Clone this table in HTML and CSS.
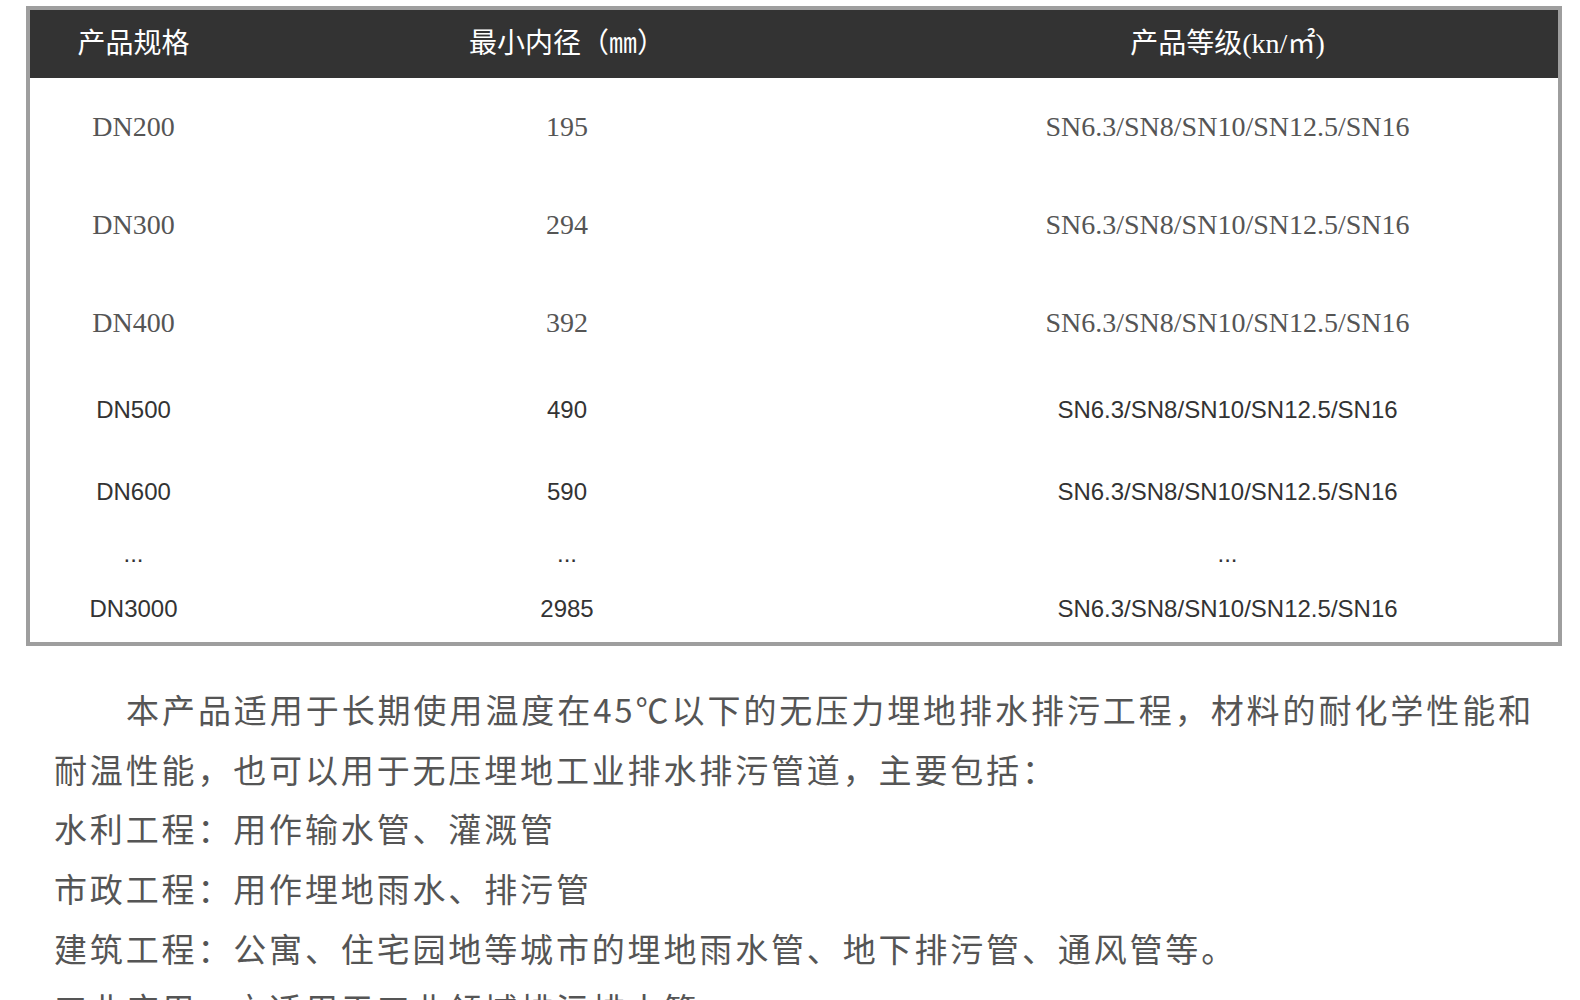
FILE: index.html
```html
<!DOCTYPE html>
<html lang="zh-CN">
<head>
<meta charset="utf-8">
<title>产品规格</title>
<link rel="stylesheet" href="styles.css">
</head>
<body>
<div class="page">
  <table class="spec">
    <colgroup>
      <col class="c1">
      <col class="c2">
      <col class="c3">
    </colgroup>
    <thead>
      <tr><th>产品规格</th><th>最小内径（㎜）</th><th>产品等级(kn/㎡)</th></tr>
    </thead>
    <tbody>
      <tr class="serif"><td>DN200</td><td>195</td><td>SN6.3/SN8/SN10/SN12.5/SN16</td></tr>
      <tr class="serif"><td>DN300</td><td>294</td><td>SN6.3/SN8/SN10/SN12.5/SN16</td></tr>
      <tr class="serif"><td>DN400</td><td>392</td><td>SN6.3/SN8/SN10/SN12.5/SN16</td></tr>
      <tr class="sans r4"><td>DN500</td><td>490</td><td>SN6.3/SN8/SN10/SN12.5/SN16</td></tr>
      <tr class="sans r5"><td>DN600</td><td>590</td><td>SN6.3/SN8/SN10/SN12.5/SN16</td></tr>
      <tr class="sans r6"><td>...</td><td>...</td><td>...</td></tr>
      <tr class="sans r7"><td>DN3000</td><td>2985</td><td>SN6.3/SN8/SN10/SN12.5/SN16</td></tr>
    </tbody>
  </table>
  <div class="desc">
    <p class="lead">本产品适用于长期使用温度在45℃以下的无压力埋地排水排污工程，材料的耐化学性能和耐温性能，也可以用于无压埋地工业排水排污管道，主要包括：</p>
    <p>水利工程：用作输水管、灌溉管</p>
    <p>市政工程：用作埋地雨水、排污管</p>
    <p>建筑工程：公寓、住宅园地等城市的埋地雨水管、地下排污管、通风管等。</p>
    <p>工业应用：亦适用于工业领域排污排水管</p>
  </div>
</div>
</body>
</html>
```

FILE: styles.css
```css
html, body {
  margin: 0;
  padding: 0;
  background: #fff;
}

.page {
  padding: 6px 18px 40px 26px;
}

.spec {
  box-sizing: border-box;
  width: 1536px;
  border: 4px solid #9e9e9e;
  border-collapse: separate;
  border-spacing: 0;
  table-layout: fixed;
}

.c1 { width: 207px; }
.c2 { width: 660px; }
.c3 { width: 661px; }

.spec th {
  background: #333;
  color: #fff;
  height: 68px;
  padding: 0;
  font-family: "Liberation Serif", "Noto Sans CJK SC", serif;
  font-size: 28px;
  font-weight: normal;
  line-height: 34px;
  text-align: center;
}

.spec td {
  padding: 0;
  text-align: center;
  vertical-align: top;
}

.serif td {
  font-family: "Liberation Serif", "Noto Sans CJK SC", serif;
  font-size: 28px;
  line-height: 34px;
  color: #555;
  padding: 32px 0;
}

.sans td {
  font-family: "Liberation Sans", Arial, sans-serif;
  font-size: 24px;
  line-height: 30px;
  color: #333;
}

.r4 td { padding: 23px 0 25px; }
.r5 td { padding: 27px 0 12px; }
.r6 td { padding: 20px 0 9px; }
.r7 td { padding: 16px 0 18px; }

.desc {
  margin: 34px 0 0 28px;
  width: 1480px;
  font-family: "Noto Sans CJK SC", "Noto Sans", sans-serif;
  font-size: 33px;
  letter-spacing: 2.85px;
  line-height: 59.7px;
  color: #555;
}

.desc p {
  margin: 0;
}

.desc .lead {
  text-indent: 72px;
  text-align: justify;
}
```
